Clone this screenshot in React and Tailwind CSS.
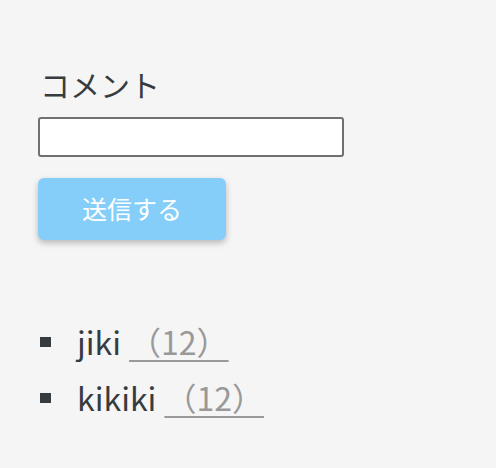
export default function App() {
  return (
    <div className="min-h-[468px] w-[496px] bg-[#f5f5f5] pl-[38px] pt-[60px] text-[#363b40] [font-family:'Noto_Sans_CJK_JP',sans-serif]">
      <label className="block pl-[2px] text-[30px] leading-[48px]">コメント</label>
      <input type="text" className="mt-[9px] block h-[40px] w-[306px] rounded-[3px] border-2 border-[#707070] bg-white" />
      <button className="mt-[21px] block h-[62px] w-[188px] rounded-[6px] bg-[#84cef9] text-[25px] text-white shadow-[0_3px_6px_rgba(0,0,0,0.25)]">送信する</button>
      <ul className="mt-[78px] flex flex-col gap-[9px]">
        <li className="flex items-center text-[32px] leading-[47px]">
          <span className="ml-[2px] mr-[26px] inline-block h-[10px] w-[11px] bg-[#363b40]" />
          <span>jiki</span>
          <span className="ml-[8px] text-[#999] underline decoration-[2px] underline-offset-[5px]">（12）</span>
        </li>
        <li className="flex items-center text-[32px] leading-[47px]">
          <span className="ml-[2px] mr-[26px] inline-block h-[10px] w-[11px] bg-[#363b40]" />
          <span>kikiki</span>
          <span className="ml-[8px] text-[#999] underline decoration-[2px] underline-offset-[5px]">（12）</span>
        </li>
      </ul>
    </div>
  );
}
